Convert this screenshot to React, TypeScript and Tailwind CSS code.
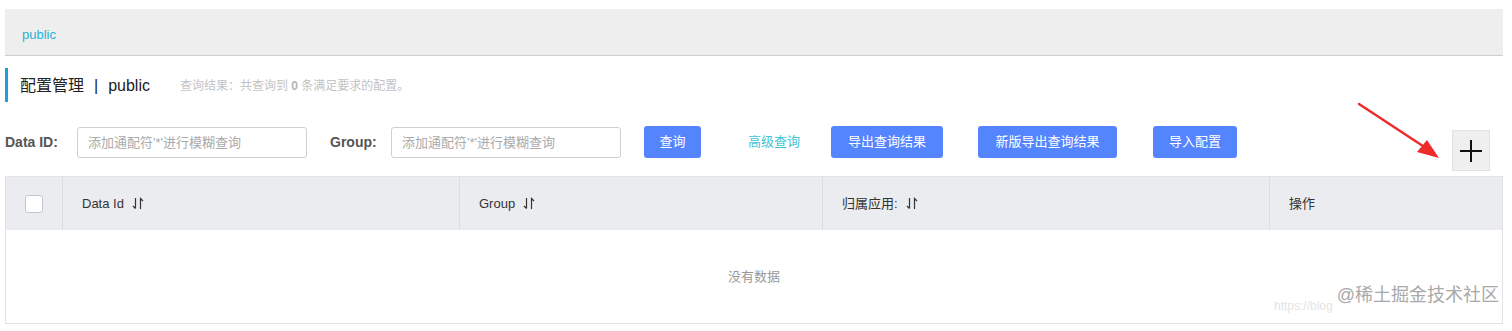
import React from "react";

const font = { fontFamily: '"Liberation Sans", "Noto Sans CJK SC", sans-serif' };

function SortIcon() {
  return (
    <svg width={12} height={13} viewBox="0 0 12 13" className="ml-[8px] inline-block">
      <path d="M3.5 1 V11.5 M1 9 L3.5 11.5" fill="none" stroke="#333" strokeWidth={1.2} />
      <path d="M8.5 12 V1.5 L11 4" fill="none" stroke="#333" strokeWidth={1.2} />
    </svg>
  );
}

function BlueButton({ label, width }: { label: string; width: string }) {
  return (
    <button className={`h-[32px] ${width} rounded-[3px] bg-[#5584ff] text-[13px] text-white`}>
      {label}
    </button>
  );
}

export default function App() {
  const columns = [
    { title: "Data Id", w: "w-[397px]", sort: true },
    { title: "Group", w: "w-[363px]", sort: true },
    { title: "归属应用:", w: "w-[447px]", sort: true },
    { title: "操作", w: "flex-1", sort: false },
  ];

  return (
    <div className="relative w-[1512px] h-[331px] bg-white pl-[5px] pr-[9px] pt-[9px]" style={font}>
      {/* breadcrumb */}
      <div className="h-[47px] bg-[#eeeeee] border-b border-[#cfcfcf] flex items-center pl-[17px] pt-[5px]">
        <span className="text-[13px] text-[#25b4d8]">public</span>
      </div>

      {/* title */}
      <div className="mt-[12px] h-[34px] border-l-[3px] border-[#1e9fd8] flex items-center pl-[12px] pt-[2px]">
        <span className="text-[16px] text-[#222]">配置管理</span>
        <span className="text-[16px] text-[#222] mx-[10px]">|</span>
        <span className="text-[16px] text-[#222]">public</span>
        <span className="ml-[30px] text-[12px] text-[#c3c3c3]">
          查询结果：共查询到 <b className="text-[#b5b5b5]">0</b> 条满足要求的配置。
        </span>
      </div>

      {/* search row */}
      <div className="mt-[24px] flex items-start">
        <div className="h-[32px] flex items-center">
          <span className="text-[14px] font-bold text-[#555] w-[72px]">Data ID:</span>
          <input
            className="h-[31px] w-[230px] rounded-[3px] border border-[#d0d0d0] px-[10px] text-[13px] placeholder:text-[#aaa] outline-none"
            placeholder="添加通配符'*'进行模糊查询"
          />
          <span className="ml-[23px] text-[14px] font-bold text-[#555] w-[61px]">Group:</span>
          <input
            className="h-[31px] w-[230px] rounded-[3px] border border-[#d0d0d0] px-[10px] text-[13px] placeholder:text-[#aaa] outline-none"
            placeholder="添加通配符'*'进行模糊查询"
          />
          <div className="ml-[23px]">
            <BlueButton label="查询" width="w-[57px]" />
          </div>
          <span className="ml-[47px] text-[13px] text-[#3fc4d6]">高级查询</span>
          <div className="ml-[31px]">
            <BlueButton label="导出查询结果" width="w-[112px]" />
          </div>
          <div className="ml-[35px]">
            <BlueButton label="新版导出查询结果" width="w-[139px]" />
          </div>
          <div className="ml-[36px]">
            <BlueButton label="导入配置" width="w-[84px]" />
          </div>
        </div>
        <div className="ml-auto mr-[13px] mt-[4px] w-[38px] h-[41px] bg-[#efefef] border border-[#e2e2e2] flex items-center justify-center">
          <svg width={24} height={24} viewBox="0 0 24 24">
            <path d="M12 1 V23 M1 12 H23" stroke="#111" strokeWidth={2} />
          </svg>
        </div>
      </div>

      {/* table */}
      <div className="mt-[5px] border border-[#e3e3e3]">
        <div className="h-[53px] bg-[#ebecf0] flex text-[13px] text-[#333]">
          <div className="w-[57px] flex items-center justify-center border-r border-[#dcdde0]">
            <div className="w-[18px] h-[18px] rounded-[3px] border border-[#c4c6cf] bg-white" />
          </div>
          {columns.map((c, i) => (
            <div
              key={c.title}
              className={`${c.w} flex items-center pl-[19px] ${i < columns.length - 1 ? "border-r border-[#dcdde0]" : ""}`}
            >
              {c.title}
              {c.sort && <SortIcon />}
            </div>
          ))}
        </div>
        <div className="relative h-[93px] flex items-center justify-center">
          <span className="text-[13px] text-[#999]">没有数据</span>
          <div className="absolute right-[3px] bottom-[14px] flex items-end">
            <span className="text-[12px] text-[#e4e4e4] mr-[4px] mb-[-6px]">https://blog</span>
            <span className="text-[18px] text-[#a9a9a9]">@稀土掘金技术社区</span>
          </div>
        </div>
      </div>

      {/* red annotation arrow */}
      <svg className="absolute left-[1355px] top-[100px]" width={90} height={64} viewBox="0 0 90 64">
        <path d="M4 4 L74 50" stroke="#ee2b2b" strokeWidth={2.5} strokeLinecap="round" />
        <path d="M84 58 L62 52 L72 40 Z" fill="#ee2b2b" />
      </svg>
    </div>
  );
}
